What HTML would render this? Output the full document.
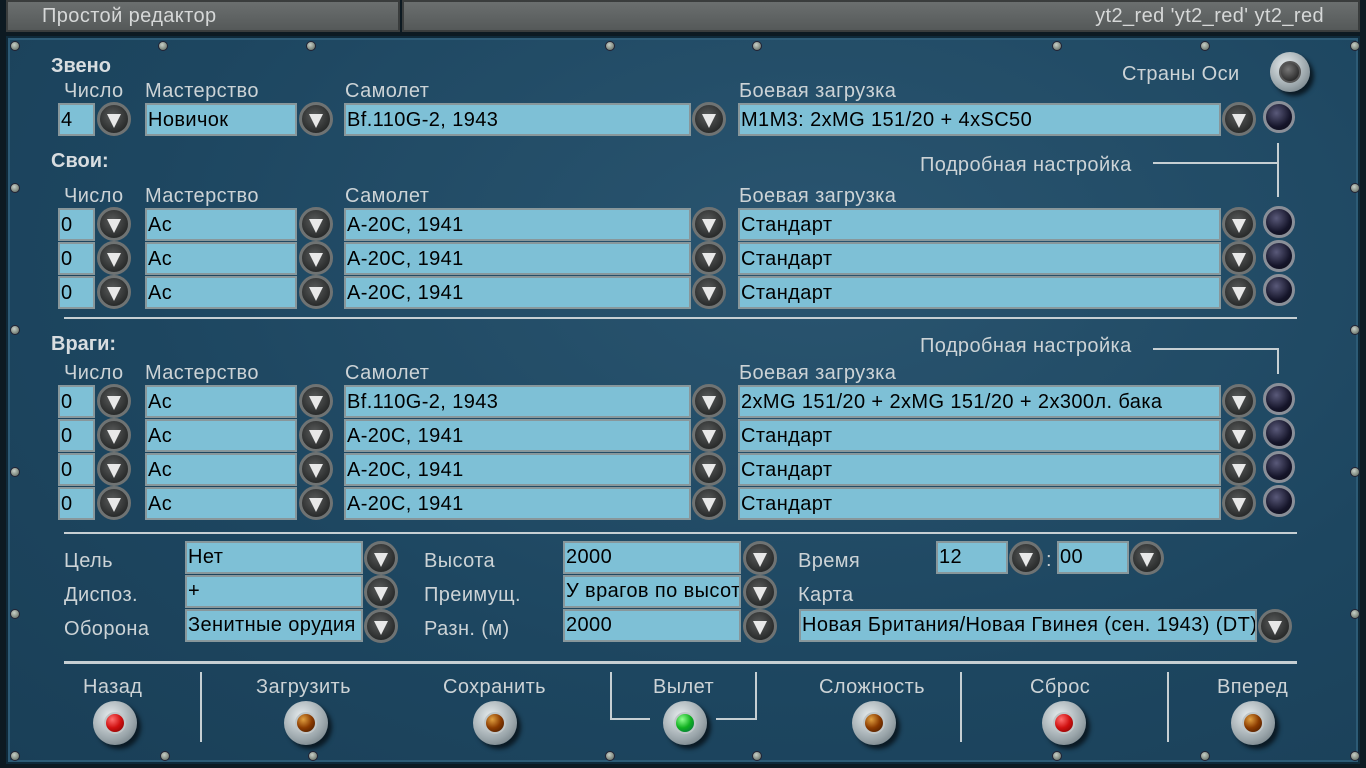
<!DOCTYPE html>
<html><head><meta charset="utf-8"><style>
*{margin:0;padding:0;box-sizing:border-box}
body{width:1366px;height:768px;overflow:hidden;background:#0d1a22;font-family:"Liberation Sans",sans-serif;position:relative;letter-spacing:0.4px}
.bar{position:absolute;top:0;height:32px;background:linear-gradient(#6b6f6f,#555959);border:2px solid #3a3d3d;color:#d6d8d8;font-size:20px;line-height:28px}
.panel{position:absolute;left:6px;top:36px;width:1354px;height:728px;background:radial-gradient(ellipse at 60% 30%,#2a5570,#1d4660 60%,#1a3f57);border:2px solid #0f2a3a;box-shadow:inset 0 0 0 2px #2d5b76}
.t{position:absolute;color:#ccd3d6;font-size:20px;white-space:nowrap;line-height:20px}
.b{font-weight:bold;color:#d8dde0;letter-spacing:0}
.in{position:absolute;background:#7ec0d6;border:2px solid #88979b;color:#000;font-size:20px;line-height:30px;padding-left:1px;white-space:nowrap;overflow:hidden;height:33px}
.dd{position:absolute;width:34px;height:34px;border-radius:50%;background:radial-gradient(circle at 45% 40%,#5a5c5c,#2a2c2c 70%);border:3px solid #6f7373}
.dd:after{content:"";position:absolute;left:7px;top:9px;border-left:7px solid transparent;border-right:7px solid transparent;border-top:14px solid #e8e8e8}
.kn{position:absolute;width:32px;height:32px;border-radius:50%;background:radial-gradient(circle at 40% 35%,#5a5a7a,#15152a 60%,#0a0a14);border:3px solid #8a8f98}
.ln{position:absolute;background:#c6cfd3}
.lamp{position:absolute;width:44px;height:44px;border-radius:50%;background:radial-gradient(circle at 40% 35%,#e8eef0,#9aa5aa 60%,#5e6a70);box-shadow:4px 4px 4px #0b1a24}
.lamp i{position:absolute;left:11px;top:11px;width:22px;height:22px;border-radius:50%;border:2px solid #bfc6c8}
.sc{position:absolute;width:10px;height:10px;border-radius:50%;background:radial-gradient(circle at 40% 35%,#c8d0c8,#556055);border:1px solid #223}
</style></head><body>
<div class="bar" style="left:6px;width:394px;padding-left:34px">Простой редактор</div>
<div class="bar" style="left:402px;width:958px;text-align:right;padding-right:34px">yt2_red 'yt2_red' yt2_red</div>
<div class="panel"></div>
<div class="sc" style="left:10px;top:41px"></div><div class="sc" style="left:158px;top:41px"></div><div class="sc" style="left:306px;top:41px"></div><div class="sc" style="left:605px;top:41px"></div><div class="sc" style="left:752px;top:41px"></div><div class="sc" style="left:1052px;top:41px"></div><div class="sc" style="left:1200px;top:41px"></div><div class="sc" style="left:1350px;top:41px"></div>
<div class="sc" style="left:10px;top:183px"></div><div class="sc" style="left:1350px;top:183px"></div><div class="sc" style="left:10px;top:325px"></div><div class="sc" style="left:1350px;top:325px"></div><div class="sc" style="left:10px;top:467px"></div><div class="sc" style="left:1350px;top:467px"></div><div class="sc" style="left:10px;top:609px"></div><div class="sc" style="left:1350px;top:609px"></div>
<div class="sc" style="left:10px;top:751px"></div><div class="sc" style="left:160px;top:751px"></div><div class="sc" style="left:308px;top:751px"></div><div class="sc" style="left:605px;top:751px"></div><div class="sc" style="left:752px;top:751px"></div><div class="sc" style="left:1052px;top:751px"></div><div class="sc" style="left:1200px;top:751px"></div><div class="sc" style="left:1350px;top:751px"></div>

<div class="t b" style="left:51px;top:56px">Звено</div>
<div class="t" style="left:1122px;top:64px">Страны Оси</div>
<div class="lamp" style="left:1270px;top:52px;width:40px;height:40px"><i style="left:9px;top:9px;background:radial-gradient(circle at 40% 35%,#777,#111);border-color:#555"></i></div>
<div class="t" style="left:64px;top:81px">Число</div><div class="t" style="left:145px;top:81px">Мастерство</div><div class="t" style="left:345px;top:81px">Самолет</div><div class="t" style="left:739px;top:81px">Боевая загрузка</div>
<div class="in" style="left:58px;top:103px;width:37px">4</div><div class="dd" style="left:97px;top:102px"></div>
<div class="in" style="left:145px;top:103px;width:152px">Новичок</div><div class="dd" style="left:299px;top:102px"></div>
<div class="in" style="left:344px;top:103px;width:347px">Bf.110G-2, 1943</div><div class="dd" style="left:692px;top:102px"></div>
<div class="in" style="left:738px;top:103px;width:483px">M1M3: 2xMG 151/20 + 4xSC50</div><div class="dd" style="left:1222px;top:102px"></div>
<div class="kn" style="left:1263px;top:101px"></div>

<div class="t b" style="left:51px;top:151px">Свои:</div>
<div class="t" style="left:920px;top:155px">Подробная настройка</div>
<div class="ln" style="left:1153px;top:162px;width:126px;height:2px"></div><div class="ln" style="left:1277px;top:143px;width:2px;height:54px"></div>
<div class="t" style="left:64px;top:186px">Число</div><div class="t" style="left:145px;top:186px">Мастерство</div><div class="t" style="left:345px;top:186px">Самолет</div><div class="t" style="left:739px;top:186px">Боевая загрузка</div>

<div class="in" style="left:58px;top:208px;width:37px">0</div><div class="dd" style="left:97px;top:207px"></div><div class="in" style="left:145px;top:208px;width:152px">Ас</div><div class="dd" style="left:299px;top:207px"></div><div class="in" style="left:344px;top:208px;width:347px">A-20C, 1941</div><div class="dd" style="left:692px;top:207px"></div><div class="in" style="left:738px;top:208px;width:483px">Стандарт</div><div class="dd" style="left:1222px;top:207px"></div><div class="kn" style="left:1263px;top:206px"></div>
<div class="in" style="left:58px;top:242px;width:37px">0</div><div class="dd" style="left:97px;top:241px"></div><div class="in" style="left:145px;top:242px;width:152px">Ас</div><div class="dd" style="left:299px;top:241px"></div><div class="in" style="left:344px;top:242px;width:347px">A-20C, 1941</div><div class="dd" style="left:692px;top:241px"></div><div class="in" style="left:738px;top:242px;width:483px">Стандарт</div><div class="dd" style="left:1222px;top:241px"></div><div class="kn" style="left:1263px;top:240px"></div>
<div class="in" style="left:58px;top:276px;width:37px">0</div><div class="dd" style="left:97px;top:275px"></div><div class="in" style="left:145px;top:276px;width:152px">Ас</div><div class="dd" style="left:299px;top:275px"></div><div class="in" style="left:344px;top:276px;width:347px">A-20C, 1941</div><div class="dd" style="left:692px;top:275px"></div><div class="in" style="left:738px;top:276px;width:483px">Стандарт</div><div class="dd" style="left:1222px;top:275px"></div><div class="kn" style="left:1263px;top:274px"></div>
<div class="ln" style="left:64px;top:317px;width:1233px;height:2px"></div>

<div class="t b" style="left:51px;top:334px">Враги:</div>
<div class="t" style="left:920px;top:336px">Подробная настройка</div>
<div class="ln" style="left:1153px;top:348px;width:126px;height:2px"></div><div class="ln" style="left:1277px;top:348px;width:2px;height:26px"></div>
<div class="t" style="left:64px;top:363px">Число</div><div class="t" style="left:145px;top:363px">Мастерство</div><div class="t" style="left:345px;top:363px">Самолет</div><div class="t" style="left:739px;top:363px">Боевая загрузка</div>
<div class="in" style="left:58px;top:385px;width:37px">0</div><div class="dd" style="left:97px;top:384px"></div><div class="in" style="left:145px;top:385px;width:152px">Ас</div><div class="dd" style="left:299px;top:384px"></div><div class="in" style="left:344px;top:385px;width:347px">Bf.110G-2, 1943</div><div class="dd" style="left:692px;top:384px"></div><div class="in" style="left:738px;top:385px;width:483px">2xMG 151/20 + 2xMG 151/20 + 2x300л. бака</div><div class="dd" style="left:1222px;top:384px"></div><div class="kn" style="left:1263px;top:383px"></div>
<div class="in" style="left:58px;top:419px;width:37px">0</div><div class="dd" style="left:97px;top:418px"></div><div class="in" style="left:145px;top:419px;width:152px">Ас</div><div class="dd" style="left:299px;top:418px"></div><div class="in" style="left:344px;top:419px;width:347px">A-20C, 1941</div><div class="dd" style="left:692px;top:418px"></div><div class="in" style="left:738px;top:419px;width:483px">Стандарт</div><div class="dd" style="left:1222px;top:418px"></div><div class="kn" style="left:1263px;top:417px"></div>
<div class="in" style="left:58px;top:453px;width:37px">0</div><div class="dd" style="left:97px;top:452px"></div><div class="in" style="left:145px;top:453px;width:152px">Ас</div><div class="dd" style="left:299px;top:452px"></div><div class="in" style="left:344px;top:453px;width:347px">A-20C, 1941</div><div class="dd" style="left:692px;top:452px"></div><div class="in" style="left:738px;top:453px;width:483px">Стандарт</div><div class="dd" style="left:1222px;top:452px"></div><div class="kn" style="left:1263px;top:451px"></div>
<div class="in" style="left:58px;top:487px;width:37px">0</div><div class="dd" style="left:97px;top:486px"></div><div class="in" style="left:145px;top:487px;width:152px">Ас</div><div class="dd" style="left:299px;top:486px"></div><div class="in" style="left:344px;top:487px;width:347px">A-20C, 1941</div><div class="dd" style="left:692px;top:486px"></div><div class="in" style="left:738px;top:487px;width:483px">Стандарт</div><div class="dd" style="left:1222px;top:486px"></div><div class="kn" style="left:1263px;top:485px"></div>
<div class="ln" style="left:64px;top:532px;width:1233px;height:2px"></div>

<div class="t" style="left:64px;top:551px">Цель</div><div class="t" style="left:64px;top:585px">Диспоз.</div><div class="t" style="left:64px;top:619px">Оборона</div>
<div class="in" style="left:185px;top:541px;width:178px;line-height:28px">Нет</div><div class="dd" style="left:364px;top:541px"></div>
<div class="in" style="left:185px;top:575px;width:178px;line-height:28px">+</div><div class="dd" style="left:364px;top:575px"></div>
<div class="in" style="left:185px;top:609px;width:178px;line-height:28px">Зенитные орудия</div><div class="dd" style="left:364px;top:609px"></div>
<div class="t" style="left:424px;top:551px">Высота</div><div class="t" style="left:424px;top:585px">Преимущ.</div><div class="t" style="left:424px;top:619px">Разн. (м)</div>
<div class="in" style="left:563px;top:541px;width:178px;line-height:28px">2000</div><div class="dd" style="left:743px;top:541px"></div>
<div class="in" style="left:563px;top:575px;width:178px;line-height:28px">У врагов по высоте</div><div class="dd" style="left:743px;top:575px"></div>
<div class="in" style="left:563px;top:609px;width:178px;line-height:28px">2000</div><div class="dd" style="left:743px;top:609px"></div>
<div class="t" style="left:798px;top:551px">Время</div><div class="t" style="left:798px;top:585px">Карта</div>
<div class="in" style="left:936px;top:541px;width:72px;line-height:28px">12</div><div class="dd" style="left:1009px;top:541px"></div>
<div class="t" style="left:1046px;top:550px">:</div>
<div class="in" style="left:1057px;top:541px;width:72px;line-height:28px">00</div><div class="dd" style="left:1130px;top:541px"></div>
<div class="in" style="left:799px;top:609px;width:458px;line-height:28px">Новая Британия/Новая Гвинея (сен. 1943) (DT)</div><div class="dd" style="left:1258px;top:609px"></div>
<div class="ln" style="left:64px;top:661px;width:1233px;height:3px"></div>

<div class="ln" style="left:200px;top:672px;width:2px;height:70px"></div><div class="ln" style="left:960px;top:672px;width:2px;height:70px"></div><div class="ln" style="left:1167px;top:672px;width:2px;height:70px"></div>
<div class="ln" style="left:610px;top:672px;width:2px;height:48px"></div><div class="ln" style="left:610px;top:718px;width:40px;height:2px"></div>
<div class="ln" style="left:755px;top:672px;width:2px;height:48px"></div><div class="ln" style="left:716px;top:718px;width:41px;height:2px"></div>

<div class="t" style="left:83px;top:677px">Назад</div><div class="t" style="left:256px;top:677px">Загрузить</div><div class="t" style="left:443px;top:677px">Сохранить</div><div class="t" style="left:653px;top:677px">Вылет</div><div class="t" style="left:819px;top:677px">Сложность</div><div class="t" style="left:1030px;top:677px">Сброс</div><div class="t" style="left:1217px;top:677px">Вперед</div>
<div class="lamp" style="left:93px;top:701px"><i style="background:radial-gradient(circle at 35% 30%,#ff7070,#d01010 50%,#700)"></i></div>
<div class="lamp" style="left:284px;top:701px"><i style="background:radial-gradient(circle at 35% 30%,#e0a040,#8a3a00 50%,#3a1500)"></i></div>
<div class="lamp" style="left:473px;top:701px"><i style="background:radial-gradient(circle at 35% 30%,#e0a040,#8a3a00 50%,#3a1500)"></i></div>
<div class="lamp" style="left:663px;top:701px"><i style="background:radial-gradient(circle at 35% 30%,#90ff90,#10b020 50%,#064)"></i></div>
<div class="lamp" style="left:852px;top:701px"><i style="background:radial-gradient(circle at 35% 30%,#e0a040,#8a3a00 50%,#3a1500)"></i></div>
<div class="lamp" style="left:1042px;top:701px"><i style="background:radial-gradient(circle at 35% 30%,#ff7070,#d01010 50%,#700)"></i></div>
<div class="lamp" style="left:1231px;top:701px"><i style="background:radial-gradient(circle at 35% 30%,#e0a040,#8a3a00 50%,#3a1500)"></i></div>
</body></html>
